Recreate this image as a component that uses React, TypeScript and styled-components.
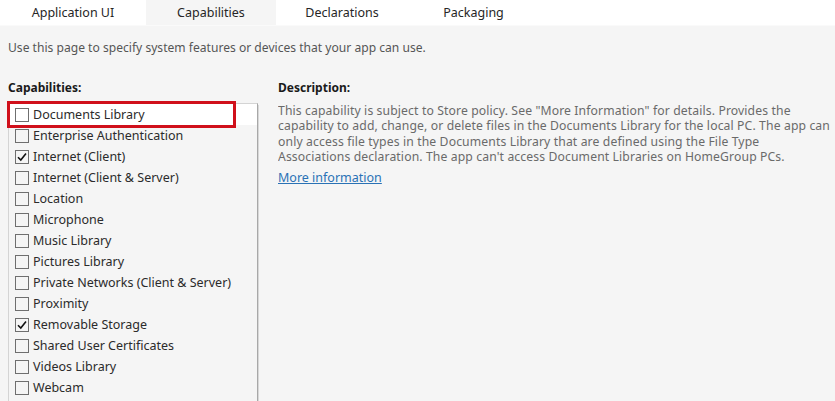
import styled, { createGlobalStyle } from 'styled-components';

const GlobalStyle = createGlobalStyle`
  html, body {
    margin: 0;
    padding: 0;
    width: 835px;
    height: 401px;
    overflow: hidden;
    background: #f5f5f5;
    font-family: 'Noto Sans', 'Open Sans', sans-serif;
  }
`;

const Page = styled.div`
  width: 835px;
  height: 401px;
  display: flex;
  flex-direction: column;
  background: #f5f5f5;
  overflow: hidden;
`;

const TabBar = styled.nav`
  display: flex;
  height: 25px;
  background: #ffffff;
  flex-shrink: 0;
`;

const Tab = styled.div<{ $active?: boolean; $width: number }>`
  width: ${(p) => p.$width}px;
  display: flex;
  align-items: center;
  justify-content: center;
  font-size: 12.5px;
  color: #262626;
  background: ${(p) => (p.$active ? '#f5f5f5' : '#ffffff')};
`;

const Content = styled.main`
  flex: 1;
  padding: 14px 0 0 8px;
  border-top: 1px solid #fafafa;
`;

const Intro = styled.p`
  margin: 0;
  font-size: 12.1px;
  line-height: 16px;
  color: #555555;
`;

const Columns = styled.div`
  display: grid;
  grid-template-columns: 250px 1fr;
  column-gap: 20px;
  margin-top: 24px;
`;

const Heading = styled.h3`
  margin: 0 0 7px;
  font-size: 12px;
  line-height: 16px;
  font-weight: 700;
  color: #1a1a1a;
`;

const ListBox = styled.ul`
  list-style: none;
  margin: 0;
  padding: 0;
  height: 300px;
  border: 1px solid #d4d4d4;
  border-right-color: #a8a8a8;
  box-shadow: 3px 0 0 -2px #d8d8d8;
`;

const Row = styled.li<{ $selected?: boolean }>`
  position: relative;
  display: flex;
  align-items: center;
  gap: 4px;
  height: 21px;
  padding-left: 6px;
  background: ${(p) => (p.$selected ? '#ffffff' : 'transparent')};
  font-size: 12.5px;
  color: #2b2b2b;
  white-space: nowrap;
`;

const Box = styled.span`
  width: 12px;
  height: 12px;
  border: 1px solid #6f6f6f;
  display: flex;
  align-items: center;
  justify-content: center;
  flex-shrink: 0;
`;

const Highlight = styled.span`
  position: absolute;
  left: -2px;
  top: -3px;
  width: 223px;
  height: 21px;
  border: 3px solid #d0101b;
  pointer-events: none;
`;

const Description = styled.div`
  font-size: 12.2px;
  letter-spacing: 0.12px;
  line-height: 15.4px;
  color: #6a6a6a;
  white-space: nowrap;
  overflow: hidden;
`;

const Link = styled.a`
  display: inline-block;
  margin-top: -1px;
  font-size: 12.5px;
  line-height: 16px;
  color: #2a72b5;
  text-decoration: underline;
`;

const capabilities: { label: string; checked?: boolean }[] = [
  { label: 'Documents Library' },
  { label: 'Enterprise Authentication' },
  { label: 'Internet (Client)', checked: true },
  { label: 'Internet (Client & Server)' },
  { label: 'Location' },
  { label: 'Microphone' },
  { label: 'Music Library' },
  { label: 'Pictures Library' },
  { label: 'Private Networks (Client & Server)' },
  { label: 'Proximity' },
  { label: 'Removable Storage', checked: true },
  { label: 'Shared User Certificates' },
  { label: 'Videos Library' },
  { label: 'Webcam' },
];

function Check() {
  return (
    <svg width="10" height="10" viewBox="0 0 10 10">
      <path d="M1 5.2 L3.8 8 L9 1.5" fill="none" stroke="#111" strokeWidth="1.6" />
    </svg>
  );
}

export default function App() {
  return (
    <Page>
      <GlobalStyle />
      <TabBar>
        <Tab $width={146}>Application UI</Tab>
        <Tab $width={130} $active>Capabilities</Tab>
        <Tab $width={132}>Declarations</Tab>
        <Tab $width={131}>Packaging</Tab>
      </TabBar>
      <Content>
        <Intro>Use this page to specify system features or devices that your app can use.</Intro>
        <Columns>
          <div>
            <Heading>Capabilities:</Heading>
            <ListBox>
              {capabilities.map((c, i) => (
                <Row key={c.label} $selected={i === 0}>
                  <Box>{c.checked && <Check />}</Box>
                  {c.label}
                  {i === 0 && <Highlight />}
                </Row>
              ))}
            </ListBox>
          </div>
          <div>
            <Heading>Description:</Heading>
            <Description>
              This capability is subject to Store policy. See "More Information" for details. Provides the
              <br />
              capability to add, change, or delete files in the Documents Library for the local PC. The app can
              <br />
              only access file types in the Documents Library that are defined using the File Type
              <br />
              Associations declaration. The app can't access Document Libraries on HomeGroup PCs.
            </Description>
            <Link href="#">More information</Link>
          </div>
        </Columns>
      </Content>
    </Page>
  );
}
